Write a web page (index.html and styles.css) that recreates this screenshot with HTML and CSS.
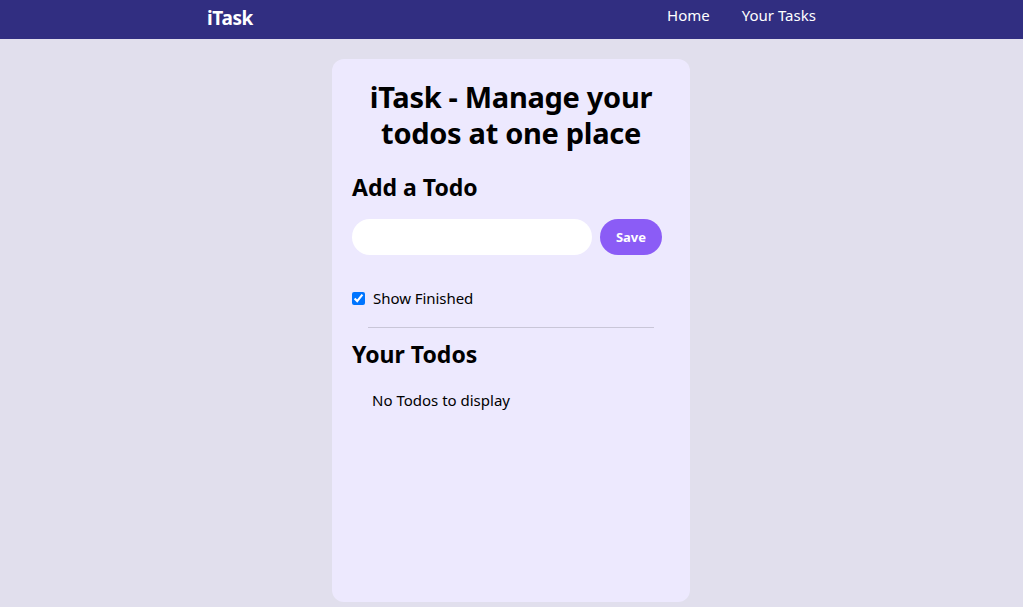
FILE: index.html
```html
<!DOCTYPE html>
<html>
<head>
<meta charset="utf-8">
<title>iTask</title>
<link rel="stylesheet" href="styles.css">
</head>
<body>
<nav class="navbar">
  <div class="logo">iTask</div>
  <ul class="links">
    <li>Home</li>
    <li>Your Tasks</li>
  </ul>
</nav>
<main class="card">
  <h1 class="title">iTask - Manage your todos at one place</h1>
  <section class="add-todo">
    <h2 class="heading">Add a Todo</h2>
    <div class="add-row">
      <input class="todo-input" type="text">
      <button class="save-btn">Save</button>
    </div>
  </section>
  <label class="show-finished"><input type="checkbox" checked> Show Finished</label>
  <div class="divider"></div>
  <h2 class="heading">Your Todos</h2>
  <div class="todos">
    <div class="empty">No Todos to display</div>
  </div>
</main>
</body>
</html>
```

FILE: styles.css
```css
* { box-sizing: border-box; }
body {
  margin: 0;
  background: #e1dfed;
  font-family: "Noto Sans", "Open Sans", sans-serif;
  color: #000;
}
.navbar {
  height: 39px;
  background: #312e81;
  color: #fff;
  display: flex;
  justify-content: space-around;
  align-items: center;
}
.logo {
  font-size: 19px;
  font-weight: 700;
  line-height: 28px;
  margin-top: -3px;
  letter-spacing: -0.4px;
}
.links {
  list-style: none;
  margin: 0;
  padding: 0;
  display: flex;
  gap: 32px;
  font-size: 15px;
  line-height: 24px;
  margin-top: -10px;
}
.card {
  width: 358px;
  margin: 20px auto 0;
  min-height: 543px;
  background: #ede9fe;
  border-radius: 12px;
  padding: 20px;
  position: relative;
  left: -0.5px;
}
.title {
  margin: 0;
  font-size: 29px;
  line-height: 36px;
  font-weight: 700;
  text-align: center;
  letter-spacing: -0.3px;
}
.add-todo {
  margin: 20px 0;
  display: flex;
  flex-direction: column;
  gap: 16px;
}
.heading {
  margin: 0;
  font-size: 23px;
  line-height: 32px;
  font-weight: 700;
  letter-spacing: 0;
}
.add-row {
  display: flex;
}
.todo-input {
  flex: 1;
  min-width: 0;
  height: 36px;
  border: none;
  border-radius: 999px;
  background: #fff;
  padding: 4px 12px;
  font: inherit;
}
.save-btn {
  margin: 0 8px;
  width: 62px;
  height: 36px;
  border: none;
  border-radius: 999px;
  background: #8b5cf6;
  color: #fff;
  font-family: inherit;
  font-size: 13px;
  font-weight: 700;
}
.show-finished {
  display: flex;
  align-items: center;
  margin-top: 31px;
  font-size: 15px;
  line-height: 24px;
  letter-spacing: -0.05px;
}
.show-finished input {
  margin: 0 8px 0 0;
  width: 13px;
  height: 13px;
}
.divider {
  width: 90%;
  height: 1px;
  margin: 17px auto 10px;
  background: rgba(0,0,0,0.15);
}
.todos {
  margin: 18px 20px 20px;
}
.empty {
  font-size: 15px;
  line-height: 24px;
}
```
